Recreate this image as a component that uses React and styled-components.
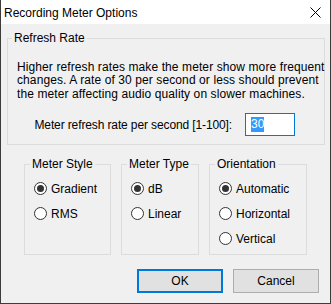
import React from "react";
import styled, { createGlobalStyle } from "styled-components";

const GlobalStyle = createGlobalStyle`
  html, body { margin: 0; padding: 0; background: #f0f0f0; }
  body { font-family: "Liberation Sans", Arial, sans-serif; font-size: 12px; color: #000; }
  *, *::before, *::after { box-sizing: border-box; }
`;

const Window = styled.div`
  width: 331px;
  height: 304px;
  border: 1px solid #3c3c3c;
  border-top: none;
  background: #f0f0f0;
  display: flex;
  flex-direction: column;
`;

const TitleBar = styled.div`
  height: 24px;
  flex: none;
  background: #fff;
  display: flex;
  align-items: center;
  justify-content: space-between;
  padding: 1px 9px 0 3px;
  font-size: 12px;
`;

const Body = styled.div`
  flex: 1;
  display: flex;
  flex-direction: column;
  padding: 7px 4px 11px 6px;
`;

const Group = styled.fieldset`
  margin: 0;
  min-width: 0;
  border: 1px solid #dcdcdc;
  padding: ${(p) => p.$pad};
  width: ${(p) => p.$width}px;
`;

const Legend = styled.legend`
  padding: 0 2px;
  margin-left: ${(p) => p.$offset}px;
  line-height: 15px;
  font-size: 12px;
`;

const Paragraph = styled.p`
  margin: 0;
  line-height: 13.4px;
  letter-spacing: 0.1px;
  white-space: nowrap;
`;

const RateRow = styled.div`
  margin-top: 12px;
  margin-right: 21px;
  display: flex;
  justify-content: flex-end;
  align-items: center;
  gap: 13px;
`;

const RateLabel = styled.span`
  letter-spacing: -0.12px;
  white-space: nowrap;
`;

const EditBox = styled.div`
  width: 50px;
  height: 23px;
  background: #fff;
  border: 1px solid #0078d7;
  padding-left: 5px;
  display: flex;
  align-items: center;
`;

const Selected = styled.span`
  background: #3399ff;
  color: #fff;
  line-height: 15px;
`;

const GroupRow = styled.div`
  margin-top: 12px;
  padding-left: 17px;
  display: flex;
  align-items: stretch;
  gap: 10px;
`;

const RadioLabel = styled.label`
  display: flex;
  align-items: center;
  height: 25px;
  gap: 4px;
  white-space: nowrap;
`;

const Radio = styled.input.attrs({ type: "radio" })`
  appearance: none;
  -webkit-appearance: none;
  margin: 0;
  width: 13px;
  height: 13px;
  flex: none;
  border: 1px solid #333;
  border-radius: 50%;
  background: #fff;
  position: relative;
  &:checked::after {
    content: "";
    position: absolute;
    left: 2px;
    top: 2px;
    width: 7px;
    height: 7px;
    border-radius: 50%;
    background: #333;
  }
`;

const ButtonRow = styled.div`
  margin-top: 14px;
  padding-right: 7px;
  display: flex;
  justify-content: flex-end;
  gap: 10px;
`;

const Button = styled.button`
  width: 86px;
  height: 24px;
  padding: 0;
  background: #e1e1e1;
  border: ${(p) => (p.$default ? "2px solid #0078d7" : "1px solid #adadad")};
  font-family: "Liberation Sans", Arial, sans-serif;
  font-size: 12px;
  color: #000;
`;

const CloseIcon = () => (
  <svg width="11" height="11" viewBox="0 0 11 11">
    <path d="M0.5 0.5 L10.5 10.5 M10.5 0.5 L0.5 10.5" stroke="#000" strokeWidth="1" fill="none" />
  </svg>
);

const RadioGroup = ({ title, width, name, options, checked }) => (
  <Group $width={width} $pad="4px 4px 3px 9px">
    <Legend $offset={-4}>{title}</Legend>
    {options.map((o) => (
      <RadioLabel key={o}>
        <Radio name={name} defaultChecked={o === checked} />
        {o}
      </RadioLabel>
    ))}
  </Group>
);

export default function App() {
  return (
    <>
      <GlobalStyle />
      <Window>
        <TitleBar>
          <span>Recording Meter Options</span>
          <CloseIcon />
        </TitleBar>
        <Body>
          <Group $width={318} $pad="15px 8px 8px 9px">
            <Legend $offset={-5}>Refresh Rate</Legend>
            <Paragraph>
              Higher refresh rates make the meter show more frequent
              <br />
              changes. A rate of 30 per second or less should prevent
              <br />
              the meter affecting audio quality on slower machines.
            </Paragraph>
            <RateRow>
              <RateLabel>Meter refresh rate per second [1-100]:</RateLabel>
              <EditBox>
                <Selected>30</Selected>
              </EditBox>
            </RateRow>
          </Group>
          <GroupRow>
            <RadioGroup title="Meter Style" width={87} name="style" options={["Gradient", "RMS"]} checked="Gradient" />
            <RadioGroup title="Meter Type" width={78} name="type" options={["dB", "Linear"]} checked="dB" />
            <RadioGroup
              title="Orientation"
              width={98}
              name="orient"
              options={["Automatic", "Horizontal", "Vertical"]}
              checked="Automatic"
            />
          </GroupRow>
          <ButtonRow>
            <Button $default>OK</Button>
            <Button>Cancel</Button>
          </ButtonRow>
        </Body>
      </Window>
    </>
  );
}
